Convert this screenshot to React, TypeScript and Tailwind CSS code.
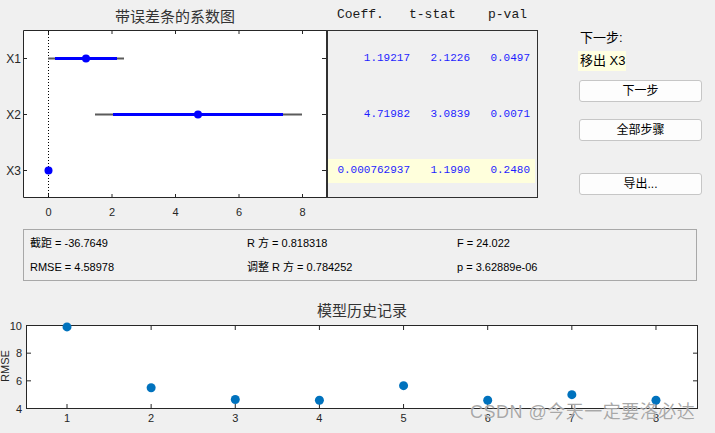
import React from "react";

const SANS = "font-['Liberation_Sans','Noto_Sans_CJK_SC',sans-serif]";
const MONO = "font-['Liberation_Mono','Noto_Sans_CJK_SC',monospace]";

function TopChart() {
  const sx = (v: number) => 48.5 + v * 31.75;
  const rows = [58.5, 114.5, 170.5];
  return (
    <svg width={326} height={229} className="block shrink-0">
      <text x={175} y={22} textAnchor="middle" fontSize={15} fill="#333" fontFamily="'Noto Sans CJK SC', sans-serif">
        带误差条的系数图
      </text>
      <rect x={23.5} y={30.5} width={303} height={167} fill="#fff" />
      <line x1={23.5} y1={30.5} x2={326} y2={30.5} stroke="#262626" />
      <line x1={23.5} y1={197.5} x2={326} y2={197.5} stroke="#262626" />
      <line x1={23.5} y1={30.5} x2={23.5} y2={197.5} stroke="#262626" />
      {[0, 2, 4, 6, 8].map((v) => (
        <g key={v}>
          <line x1={sx(v)} y1={197.5} x2={sx(v)} y2={194} stroke="#262626" />
          <line x1={sx(v)} y1={30.5} x2={sx(v)} y2={34} stroke="#262626" />
          <text x={sx(v)} y={216} textAnchor="middle" fontSize={11} fill="#262626" fontFamily="'Liberation Sans', sans-serif">
            {v}
          </text>
        </g>
      ))}
      {rows.map((y, i) => (
        <g key={i}>
          <line x1={23.5} y1={y} x2={27} y2={y} stroke="#262626" />
          <line x1={322} y1={y} x2={326} y2={y} stroke="#262626" />
          <text x={21} y={y + 4.5} textAnchor="end" fontSize={12} fill="#262626" fontFamily="'Liberation Sans', sans-serif">
            {`X${i + 1}`}
          </text>
        </g>
      ))}
      <line x1={48.5} y1={31} x2={48.5} y2={197} stroke="#000" strokeDasharray="1 2" />
      {/* X1 */}
      <line x1={48} y1={58.5} x2={124} y2={58.5} stroke="#5b5b5b" strokeWidth={2} />
      <line x1={55} y1={58.5} x2={117} y2={58.5} stroke="#0000ff" strokeWidth={3} />
      <circle cx={86} cy={58.5} r={4} fill="#0000ff" />
      {/* X2 */}
      <line x1={95} y1={114.5} x2={302} y2={114.5} stroke="#5b5b5b" strokeWidth={2} />
      <line x1={113} y1={114.5} x2={283} y2={114.5} stroke="#0000ff" strokeWidth={3} />
      <circle cx={198} cy={114.5} r={4} fill="#0000ff" />
      {/* X3 */}
      <circle cx={48.5} cy={170.5} r={4} fill="#0000ff" />
    </svg>
  );
}

function BottomChart() {
  const values = [9.9, 5.5, 4.65, 4.6, 5.65, 4.6, 5.0, 4.6];
  const sy = (v: number) => 30.5 + ((10 - v) / 6) * 83;
  const sx = (i: number) => 67 + (i - 1) * 84.14;
  return (
    <svg width={715} height={138} className="block">
      <text x={362} y={21} textAnchor="middle" fontSize={15} fill="#333" fontFamily="'Noto Sans CJK SC', sans-serif">
        模型历史记录
      </text>
      <rect x={26.5} y={30.5} width={671} height={83} fill="#fff" stroke="#262626" />
      {[10, 8, 6, 4].map((v) => (
        <g key={v}>
          <line x1={26.5} y1={sy(v)} x2={31} y2={sy(v)} stroke="#262626" />
          <line x1={693} y1={sy(v)} x2={697.5} y2={sy(v)} stroke="#262626" />
          <text x={22} y={sy(v) + 4} textAnchor="end" fontSize={11} fill="#262626" fontFamily="'Liberation Sans', sans-serif">
            {v}
          </text>
        </g>
      ))}
      {[1, 2, 3, 4, 5, 6, 7, 8].map((i) => (
        <g key={i}>
          <line x1={sx(i)} y1={113.5} x2={sx(i)} y2={109} stroke="#262626" />
          <line x1={sx(i)} y1={30.5} x2={sx(i)} y2={35} stroke="#262626" />
          <text x={sx(i)} y={127} textAnchor="middle" fontSize={11} fill="#262626" fontFamily="'Liberation Sans', sans-serif">
            {i}
          </text>
        </g>
      ))}
      <text
        x={0}
        y={0}
        transform="translate(9 71) rotate(-90)"
        textAnchor="middle"
        fontSize={11}
        fill="#262626"
        fontFamily="'Liberation Sans', sans-serif"
      >
        RMSE
      </text>
      {values.map((v, i) => (
        <circle key={i} cx={sx(i + 1)} cy={sy(v)} r={4.5} fill="#0072BD" />
      ))}
    </svg>
  );
}

function StatsTable() {
  const rows = [
    ["1.19217", "2.1226", "0.0497"],
    ["4.71982", "3.0839", "0.0071"],
    ["0.000762937", "1.1990", "0.2480"],
  ];
  return (
    <div className="flex flex-col w-[212px] shrink-0">
      <div className={`h-[30px] flex items-center pl-[11px] text-[13px] text-[#1a1a1a] ${MONO}`}>
        <span className="w-[72px]">Coeff.</span>
        <span className="w-[79px]">t-stat</span>
        <span>p-val</span>
      </div>
      <div className="h-[168px] border-l-2 border-t border-r border-b border-[#303030] -mt-[0.5px] overflow-hidden flex flex-col">
        {rows.map((r, i) => (
          <div key={i} className="h-[56px] flex items-center shrink-0">
            <div
              className={`h-[24px] w-[207px] flex items-center text-[11px] text-[#1e1eff] ${MONO} ${
                i === 2 ? "bg-[#ffffdc]" : ""
              }`}
            >
              <span className="w-[82px] text-right">{r[0]}</span>
              <span className="w-[60px] text-right">{r[1]}</span>
              <span className="w-[60px] text-right">{r[2]}</span>
            </div>
          </div>
        ))}
      </div>
    </div>
  );
}

function Btn({ label, className }: { label: string; className: string }) {
  return (
    <button
      className={`w-[123px] h-[22px] ml-[1px] bg-[#fdfdfd] border border-[#c6c6c6] rounded-[3px] text-[12px] text-black flex items-center justify-center ${SANS} ${className}`}
    >
      {label}
    </button>
  );
}

function SidePanel() {
  return (
    <div className={`ml-[40px] flex flex-col text-black ${SANS}`}>
      <div className="mt-[29px] h-[18px] pl-[2px] text-[13px] leading-[18px]">下一步:</div>
      <div className="mt-[4px] h-[20px] w-[48px] bg-[#ffffe1] pl-[2px] flex items-center text-[13px] whitespace-nowrap">
        移出 X3
      </div>
      <Btn label="下一步" className="mt-[9px]" />
      <Btn label="全部步骤" className="mt-[17px]" />
      <Btn label="导出..." className="mt-[32px]" />
    </div>
  );
}

function SummaryBox() {
  const cell = "h-[24px] flex items-center whitespace-nowrap";
  return (
    <div
      className={`ml-[23px] w-[674px] h-[52px] border border-[#a8a8a8] pt-[1px] text-[11px] text-black ${SANS} grid grid-cols-[217px_210px_1fr] pl-[6px]`}
    >
      <div className={cell}>截距 = -36.7649</div>
      <div className={cell}>R 方 = 0.818318</div>
      <div className={cell}>F = 24.022</div>
      <div className={cell}>RMSE = 4.58978</div>
      <div className={cell}>调整 R 方 = 0.784252</div>
      <div className={cell}>p = 3.62889e-06</div>
    </div>
  );
}

export default function App() {
  return (
    <div className={`relative w-[715px] h-[433px] bg-[#f0f0f0] overflow-hidden ${SANS}`}>
      <div className="flex h-[229px]">
        <TopChart />
        <StatsTable />
        <SidePanel />
      </div>
      <SummaryBox />
      <div className="mt-[14px]">
        <BottomChart />
      </div>
      <div className="absolute left-[470px] top-[400px] text-[18px] leading-[24px] tracking-[0.5px] text-[#8c8c8c]/75 whitespace-nowrap font-['Liberation_Sans','Noto_Sans_CJK_SC',sans-serif] [text-shadow:0_0_1px_#fff]">
        CSDN @今天一定要洛必达
      </div>
    </div>
  );
}
